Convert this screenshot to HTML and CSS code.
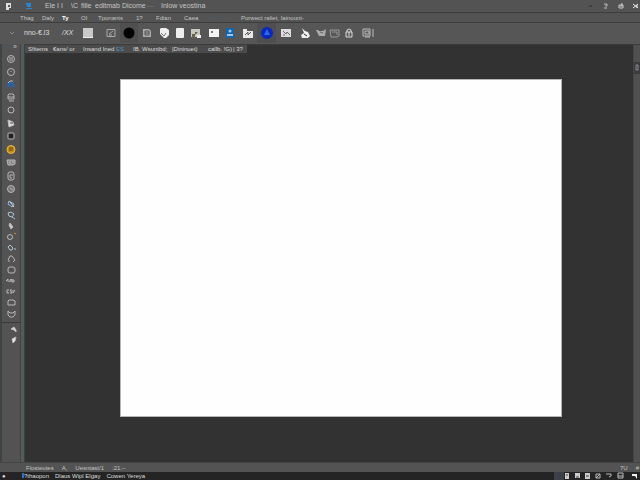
FILE: index.html
```html
<!DOCTYPE html>
<html lang="en">
<head>
<meta charset="utf-8">
<title>Image editor</title>
<link rel="stylesheet" href="styles.css">
</head>
<body>
<header class="titlebar">
  <svg class="logo" viewBox="0 0 8 8"><path d="M1 1h5v5H4v2H1z" fill="#ddd"/><path d="M3 3h2v2H3z" fill="#555"/></svg>
  <svg class="logo" viewBox="0 0 8 8"><path d="M1 1h5v2H1zM2 3h4v2H2zM1 6h6v1H1z" fill="#2387d3"/></svg>
  <div class="title"><span>Ele I I</span><span>\C</span><span>fille</span><span>editmab</span><span>Dicome</span><span class="dim">—</span><span>Inlow veostina</span></div>
  <div class="window-buttons">
    <button aria-label="Collapse"><svg viewBox="0 0 8 8"><path d="M2 4h3" stroke="#303030"/></svg></button>
    <button aria-label="Minimize"><svg viewBox="0 0 8 8"><path d="M2 2h3v2H3M2 6h3" fill="none" stroke="#bbb"/></svg></button>
    <button aria-label="Restore"><svg viewBox="0 0 8 8"><path d="M2 3h4v3H2zM5 1v3M3 4h2" fill="none" stroke="#ccc"/></svg></button>
    <button aria-label="Close"><svg viewBox="0 0 8 8"><path d="M1 2l5 4M1 6l5-4M5 3v3" fill="none" stroke="#eee"/></svg></button>
  </div>
</header>
<nav class="menubar">
  <a href="#">Thag</a><a href="#">Daly</a><a href="#" class="active">Ty</a><a href="#">OI</a><a href="#">Tponants</a><a href="#">1?</a><a href="#">Fdian</a><a href="#">Caea</a><a href="#" class="link">——––,</a><a href="#">Purwect raliet, Iainount-</a>
</nav>
<section class="options" aria-label="Tool options">
  <button class="chevron" aria-label="Presets"><svg viewBox="0 0 12 12"><path d="M4 5l2 2 2-2" fill="none" stroke="#888"/></svg></button>
  <span class="preset">nno-&#8364;.l3</span><span class="mode">/XX</span>
  <div class="group g18 first">
    <button aria-label="Swatch"><svg viewBox="0 0 12 12"><path d="M1 1h10v10H1z" fill="#c9c9c9"/><path d="M1 10h10v1H1z" fill="#eee"/></svg></button>
  </div>
  <div class="group g18">
    <button aria-label="Brush settings"><svg viewBox="0 0 12 12"><path d="M2 2.500h8v7H2zM4 7l4-3M4 8h3" fill="none" stroke="#aaa"/></svg></button>
    <button class="pressed" aria-label="Round brush"><svg viewBox="0 0 12 12"><circle cx="6" cy="6" r="5.500" fill="#000"/></svg></button>
    <button aria-label="Page"><svg viewBox="0 0 12 12"><path d="M2 2h6l2 2v6H2z" fill="#aaa"/><path d="M4 4h4v4H4zM4 6h4" fill="none" stroke="#555"/></svg></button>
  </div>
  <div class="group g16">
    <button aria-label="Shield"><svg viewBox="0 0 12 12"><path d="M3 1h5l3 2v5l-3 3H6L2 7V2z" fill="#eee"/><path d="M3 6l3 3 2-3" fill="none" stroke="#777"/></svg></button>
    <button aria-label="Blank"><svg viewBox="0 0 12 12"><rect x="2" y="1" width="8" height="10" rx="1" fill="#eee"/></svg></button>
    <button aria-label="Layer"><svg viewBox="0 0 12 12"><path d="M1 2h9v8H1z" fill="#c8c7bb"/><path d="M5 5h3L5 8v3H2V7h3z" fill="#64634f"/><path d="M7 8h4v3H7z" fill="#eee"/></svg></button>
  </div>
  <div class="group g16 after">
    <button aria-label="Card"><svg viewBox="0 0 12 12"><path d="M1 2h10v8H1z" fill="#f2f2f2"/><path d="M3 4h2v2H3z" fill="#777"/></svg></button>
    <button aria-label="Profile"><svg viewBox="0 0 12 12"><path d="M2 1h8v10H2z" fill="#1464ac"/><circle cx="6" cy="4" r="1.500" fill="#9cc8ef"/><path d="M3 9V7h6v2z" fill="#9cc8ef"/></svg></button>
  </div>
  <div class="group g19">
    <button aria-label="Folder"><svg viewBox="0 0 12 12"><path d="M1 2h4v2h6v7H1z" fill="#e8e8e8"/><path d="M3 8l3-3v3l3-3" fill="none" stroke="#555"/></svg></button>
    <button class="pressed" aria-label="Color"><svg viewBox="0 0 12 12"><circle cx="6" cy="6" r="6" fill="#0829bd"/><path d="M6 2l3 6H3z" fill="#2868f4"/></svg></button>
    <button aria-label="Picture"><svg viewBox="0 0 12 12"><path d="M1 2h10v8H1z" fill="#ddd"/><path d="M3 4l3 3 1-2 3 3M3 8h2" fill="none" stroke="#706070"/></svg></button>
    <button aria-label="Fill"><svg viewBox="0 0 12 12"><path d="M3 1l3 3 3 1 2 4-2 2H3L2 8l3-2z" fill="#eee"/><path d="M5 7l3 2" stroke="#333"/></svg></button>
  </div>
  <div class="group g14">
    <button aria-label="Cup"><svg viewBox="0 0 12 12"><path d="M1 3h2l1 1h4l3-2-1 7H4z" fill="#aaa"/><path d="M5 5l3 1" stroke="#666"/></svg></button>
    <button aria-label="Frame"><svg viewBox="0 0 12 12"><path d="M1 3h9v6l-2 1H2zM3 5h5v3" fill="none" stroke="#999"/></svg></button>
    <button aria-label="Lock"><svg viewBox="0 0 12 12"><path d="M4 5V3l2-1 2 1v2M3 5h6v5H3zM6 5v4" fill="none" stroke="#ddd"/></svg></button>
  </div>
  <div class="group g19 after">
    <button aria-label="Panel"><svg viewBox="0 0 12 12"><path d="M1 2h7v7H1zM3 4h4v3H3zM3 10h5M11 2v8" fill="none" stroke="#bbb"/></svg></button>
  </div>
</section>
<main class="workspace">
  <aside class="tools" aria-label="Tools">
    <div class="more">»</div>
    <div class="set large">
      <button aria-label="Move"><svg viewBox="0 0 10 10"><circle cx="5" cy="5" r="3.500"/><path d="M4 3v4M6 3v4"/></svg></button>
      <button aria-label="Marquee"><svg viewBox="0 0 10 10"><circle cx="5" cy="5" r="3.500"/><path d="M5 4v1"/></svg></button>
      <button aria-label="Lasso"><svg viewBox="0 0 10 10"><path d="M1 6l2-4h4l2 4-1 2-3-3-3 3z" fill="#2465a6" stroke="none"/><path d="M2 3l2-2h3"/></svg></button>
      <button aria-label="Crop"><svg viewBox="0 0 10 10"><path d="M2 2l1-1h4l1 1v4H2zM3 8h5M2 4h6"/></svg></button>
      <button aria-label="Ellipse"><svg viewBox="0 0 10 10"><circle cx="5" cy="4" r="3"/></svg></button>
      <button aria-label="Eyedropper"><svg viewBox="0 0 10 10"><path d="M2 1l5 2 1 3-5 2z" fill="#ddd"/><path d="M4 4h3" stroke="#444"/></svg></button>
      <button aria-label="Stamp"><svg viewBox="0 0 10 10"><rect x="2" y="1" width="6" height="6" rx="1" fill="#222"/></svg></button>
      <button aria-label="Sponge"><svg viewBox="0 0 10 10"><circle cx="5" cy="4.500" r="4" fill="#c88d09" stroke="#e4b552"/><path d="M3 3h4M3 5h4" stroke="#654313"/></svg></button>
      <button aria-label="Patch"><svg viewBox="0 0 10 10"><path d="M1 2h8v4l-2 1H2zM4 3v3M7 3v2" fill="#888"/></svg></button>
      <button aria-label="Clone"><svg viewBox="0 0 10 10"><rect x="2" y="1" width="6" height="8" rx="2"/><path d="M4 4h3M4 4v3h2"/></svg></button>
      <button aria-label="History"><svg viewBox="0 0 10 10"><circle cx="5" cy="5" r="3.500" fill="#777"/><path d="M4 4l3 2"/></svg></button>
    </div>
    <div class="set medium">
      <button aria-label="Brush"><svg viewBox="0 0 10 10"><path d="M3 2l5 3-2 3-4-3z" fill="#28578f"/><path d="M4 3l4 5" stroke="#ddd"/></svg></button>
      <button aria-label="Search"><svg viewBox="0 0 10 10"><path d="M2 3l3-1 3 2-2 3-3-1zM6 7l3 2" stroke="#abc4db"/></svg></button>
      <button aria-label="Pen"><svg viewBox="0 0 10 10"><path d="M4 2l3 4-2 2-2-4z" fill="#ccc"/></svg></button>
      <button aria-label="Dodge"><svg viewBox="0 0 10 10"><circle cx="4" cy="5" r="2.500"/><path d="M8 1l2 1" stroke="#cf8d2c"/></svg></button>
      <button aria-label="Smudge"><svg viewBox="0 0 10 10"><path d="M2 4l2-2 3 3-1 2H4zM8 6h2" stroke="#b4c6cf"/></svg></button>
      <button aria-label="Shape"><svg viewBox="0 0 10 10"><path d="M2 6l2-4h2l3 4-2 2M2 7h2"/></svg></button>
      <button aria-label="Rounded shape"><svg viewBox="0 0 10 10"><rect x="2" y="2" width="7" height="6" rx="2"/></svg></button>
      <button aria-label="Text"><svg viewBox="0 0 10 10"><path d="M0 5l2-2v3M3 6l2-3v3M6 3v3h2V4H6"/></svg></button>
      <button aria-label="Vertical text"><svg viewBox="0 0 10 10"><path d="M3 3H1v3h2M6 3H4l2 3H4M7 3v3l2-3"/></svg></button>
      <button aria-label="Rectangle"><svg viewBox="0 0 10 10"><path d="M2 3l1-1h4l2 1v4H2z"/></svg></button>
      <button aria-label="Hand"><svg viewBox="0 0 10 10"><path d="M2 2v4l2 2h3l2-2V2L7 4H4z"/></svg></button>
    </div>
    <div class="set small">
      <button aria-label="Swap colors"><svg viewBox="0 0 10 10"><path d="M3 4l3-2 2 3v2L6 5z" fill="#ddd"/></svg></button>
      <button aria-label="Quick mask"><svg viewBox="0 0 10 10"><path d="M4 4l4-2-1 4-2 2z" fill="#eee"/></svg></button>
    </div>
  </aside>
  <div class="gutter"></div>
  <section class="document">
    <div class="tabs"><span>Sfitems</span><span>€ans/ or</span><span>Insand Ined <b>ES</b></span><span>IB. Wsuntbd;</span><span>|Dininuet)</span><span>callb. !G)</span><span>| 3?</span></div>
    <div class="artboard"></div>
  </section>
  <aside class="dock"><button aria-label="Open panel"><svg viewBox="0 0 6 10"><path d="M2 2h2v5H2z" fill="none" stroke="#8a8a91"/></svg></button></aside>
</main>
<footer class="status">
  <span>Flosteutes</span><span>A,</span><span>Uesntast/1</span><span>:21.–</span>
  <span class="zoom">7U</span><span>#</span>
</footer>
<footer class="taskbar">
  <span class="start">●</span><span><i></i>?thaopon</span><span>Dlaus Wipl Elgay</span><span>Cowen Yereya</span>
  <div class="tray"><svg viewBox="0 0 86 8"><path d="M0 0h10v8H0z" fill="#3b4147"/><path d="M11 1h4v6h-4zM21 1h5v5h-5zM31 1h5v6h-5z" fill="#ccc"/><path d="M12 3h2M22 5h3M32 4h3" stroke="#444"/><path d="M42 2h4v4h-4zM42 6l4-4M52 2h5v2l-2 1M64 1h5v5h-5zM64 4h5" fill="none" stroke="#bbb"/><path d="M78 2h5v5l-2-3h-3z" fill="#eee"/></svg></div>
</footer>
</body>
</html>
```
FILE: styles.css
```css
* { box-sizing: border-box; }
body {
  margin: 0;
  height: 100vh;
  display: flex;
  flex-direction: column;
  overflow: hidden;
  background: #535353;
  color: #c4c4c4;
  font: 7px/8px "Liberation Sans", Arial, sans-serif;
  white-space: nowrap;
}
button {
  display: flex;
  align-items: center;
  justify-content: center;
  padding: 0;
  border: 0;
  background: none;
}
a { color: inherit; text-decoration: none; }
svg { display: block; }

.titlebar {
  display: flex;
  align-items: center;
  height: 13px;
  padding-left: 5px;
  border-bottom: 1px solid #3d3d3d;
}
.logo { width: 8px; height: 8px; margin-right: 12px; }
.title {
  display: grid;
  grid-template-columns: 26px 10px 14px 27px 25px 14px auto;
}
.dim { color: #777; }
.window-buttons { display: flex; gap: 7px; margin-left: auto; }
.window-buttons svg { width: 8px; height: 8px; }

.menubar {
  display: grid;
  grid-template-columns: 22px 20px 19px 17px 38px 20px 28px 26px 31px auto;
  align-items: center;
  height: 10px;
  padding-left: 20px;
  border-bottom: 1px solid #3d3d3d;
  font-size: 6px;
}
.active { color: #fff; font-weight: bold; }
.link { color: #47647c; }

.options {
  display: flex;
  align-items: center;
  height: 21px;
  padding-bottom: 1px;
  background: #565656;
}
.options svg { width: 12px; height: 12px; }
.chevron { width: 24px; }
.preset { width: 38px; color: #ddd; }
.mode { width: 17px; color: #ddd; font-style: italic; }
.group { display: flex; }
.group button { height: 20px; }
.first { margin-right: 5px; }
.after { margin-left: 2px; }
.g18 button { width: 18px; }
.g16 button { width: 16px; }
.g19 button { width: 19px; }
.g14 button { width: 14px; }
.pressed { background: #4f4f4f; }

.workspace { display: flex; flex: 1; min-height: 0; }
.tools {
  width: 21px;
  border-left: 2px solid #3e4346;
  border-right: 1px solid #444;
  background: #535353;
}
.more { height: 8px; text-align: right; padding-right: 3px; line-height: 6px; }
.set button { width: 18px; }
.set svg { width: 10px; height: 10px; fill: none; stroke: #b8b8b8; }
.large button { height: 13px; }
.medium { padding: 3px 0; border-bottom: 1px solid #393939; }
.medium button { height: 11px; }
.small { padding: 2px 0 0 2px; }
.small button { height: 10px; }
.gutter {
  width: 4px;
  background: #555a5d;
  border-right: 1px solid #404040;
}
.document {
  display: flex;
  flex-direction: column;
  flex: 1;
  background: #323232;
  border-top: 1px solid #3c3c3c;
}
.tabs {
  display: grid;
  grid-template-columns: 25px 30px 50px 39px 36px 25px auto;
  align-self: flex-start;
  height: 8px;
  padding: 0 4px 0 3px;
  background: #4b4b4b;
  color: #ddd;
  font-size: 6px;
}
.tabs b { color: #4b93c4; font-weight: normal; }
.artboard {
  flex: 1;
  margin: 26px 71px 45px 95px;
  background: #fefefe;
  border: 1px solid #b5b5b5;
}
.dock {
  width: 7px;
  padding-top: 17px;
  background: #505050;
  border-left: 1px solid #444;
  border-top: 1px solid #3c3c3c;
}
.dock button { width: 6px; height: 12px; background: #3b3b40; }
.dock svg { width: 6px; height: 10px; }

.status {
  display: flex;
  align-items: center;
  gap: 8px;
  height: 10px;
  padding: 0 1px 0 26px;
  border-top: 1px solid #444;
  font-size: 6px;
}
.zoom { margin-left: auto; }
.taskbar {
  display: flex;
  align-items: center;
  gap: 6px;
  height: 8px;
  background: #242424;
  color: #ddd;
  font-size: 6px;
}
.start { width: 10px; padding-left: 2px; }
.taskbar i {
  display: inline-block;
  width: 2px;
  height: 5px;
  margin-left: 6px;
  background: #2d72c4;
}
.tray { margin-left: auto; }
.tray svg { width: 86px; height: 8px; }
```
